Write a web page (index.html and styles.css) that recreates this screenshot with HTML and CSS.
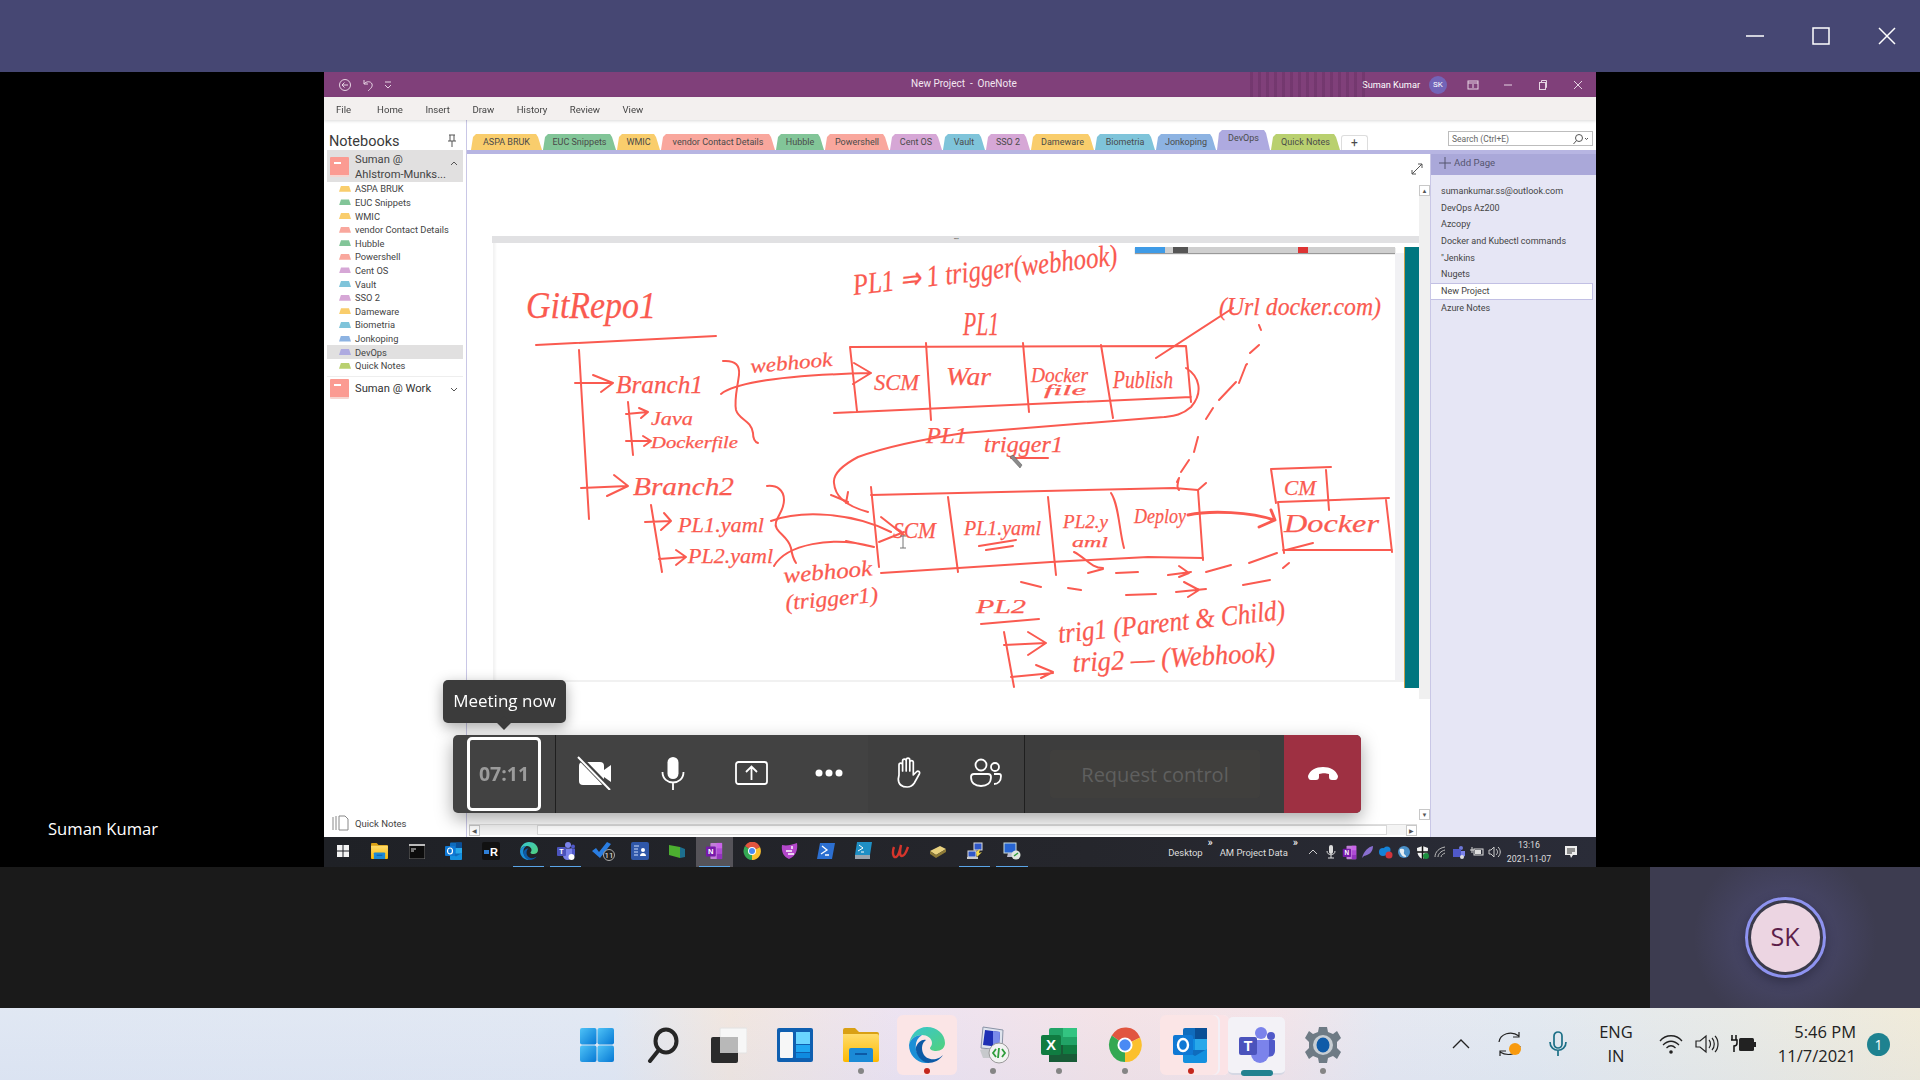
FILE: index.html
```html
<!DOCTYPE html>
<html lang="en">
<head>
    <meta charset="UTF-8">
    <meta name="viewport" content="width=device-width, initial-scale=1.0">
    <title>Meeting now</title>
    <link rel="stylesheet" href="styles.css">
</head>
<body>
    <!-- shared icons -->
    <svg class="sprite" width="0" height="0">
        <defs>
            <linearGradient id="gWin" x1="0" y1="0" x2="1" y2="1"><stop offset="0" stop-color="#4fc3f7"/><stop offset="1" stop-color="#0678d4"/></linearGradient>
            <linearGradient id="gEdge" x1="0" y1="0" x2="1" y2="1"><stop offset="0" stop-color="#37c6d0"/><stop offset="1" stop-color="#52d17c"/></linearGradient>
            <linearGradient id="gFolder" x1="0" y1="0" x2="0" y2="1"><stop offset="0" stop-color="#ffdc6b"/><stop offset="1" stop-color="#fdb900"/></linearGradient>
            <symbol id="i-edge" viewBox="0 0 36 36">
                <path d="M18 0C28 0 36 7 36 16c0 5-4 8-9 8-3 0-6-1-6-3 0-1 2-2 2-5 0-5-5-8-10-8C7 8 1 12 0 18 1 8 8 0 18 0z" fill="url(#gEdge)"/>
                <path d="M0 18C1 12 7 8 13 8c-5 3-7 8-6 14 1 6 6 12 13 14C9 37 0 29 0 18z" fill="#1b8fd6"/>
                <path d="M7 20c2-5 6-8 10-7-4 3-5 8-3 13 2 5 7 7 13 6 3-1 5-2 7-4-3 5-9 8-15 8C13 35 6 28 7 20z" fill="#0c5aa6"/>
            </symbol>
            <symbol id="i-folder" viewBox="0 0 36 34">
                <path d="M0 2a2 2 0 0 1 2-2h10l4 4h18a2 2 0 0 1 2 2v4H0z" fill="#d9a014"/>
                <path d="M0 6h34a2 2 0 0 1 2 2v24a2 2 0 0 1-2 2H2a2 2 0 0 1-2-2z" fill="url(#gFolder)"/>
                <path d="M6 22a2 2 0 0 1 2-2h20a2 2 0 0 1 2 2v12H6z" fill="#1b8ad6"/>
                <rect x="12" y="25" width="12" height="2" fill="#0c5aa6"/>
            </symbol>
            <symbol id="i-outlook" viewBox="0 0 36 36">
                <rect x="10" y="1" width="24" height="34" rx="2" fill="#0f6cbd"/>
                <rect x="22" y="1" width="12" height="11" fill="#0a4f96"/>
                <rect x="22" y="12" width="12" height="11" fill="#28a8ea"/>
                <rect x="10" y="12" width="12" height="11" fill="#0f8be0"/>
                <path d="M10 22l12 7 12-7v12a2 2 0 0 1-2 2H12a2 2 0 0 1-2-2z" fill="#1490df"/>
                <rect x="0" y="8" width="20" height="20" rx="2" fill="#0f78d4"/>
                <ellipse cx="10" cy="18" rx="5" ry="6" fill="none" stroke="#fff" stroke-width="2.4"/>
            </symbol>
            <symbol id="i-chrome" viewBox="0 0 36 36">
                <path d="M18 18L4 8A17 18 0 0 1 34 10z" fill="#e1553f"/>
                <path d="M18 18L34 10A17 18 0 0 1 18 36z" fill="#fbc02d"/>
                <path d="M18 18L18 36A17 18 0 0 1 4 8z" fill="#34a853"/>
                <circle cx="18" cy="18" r="8" fill="#fff"/>
                <circle cx="18" cy="18" r="6" fill="#4a8af4"/>
            </symbol>
            <symbol id="i-teams" viewBox="0 0 36 36">
                <circle cx="22" cy="6" r="6" fill="#7b83eb"/>
                <circle cx="32" cy="9" r="4" fill="#5059c9"/>
                <path d="M27 13h8a1 1 0 0 1 1 1v10a6 6 0 0 1-9 5z" fill="#5059c9"/>
                <path d="M12 13h18v14a9 9 0 0 1-18 0z" fill="#7b83eb"/>
                <rect x="0" y="10" width="18" height="18" rx="2" fill="#4b53bc"/>
                <text x="9" y="24" class="icon-letter" font-size="14" text-anchor="middle">T</text>
            </symbol>
            <symbol id="i-onenote" viewBox="0 0 20 20">
                <rect x="6" y="1" width="13" height="18" rx="1" fill="#c17fd8"/>
                <rect x="13" y="1" width="6" height="6" fill="#ca64ea"/>
                <rect x="13" y="7" width="6" height="6" fill="#ae4bd5"/>
                <rect x="13" y="13" width="6" height="6" fill="#9332bf"/>
                <rect x="1" y="5" width="11" height="11" rx="1" fill="#7719aa"/>
                <text x="6.5" y="13.5" class="icon-letter" font-size="8.5" text-anchor="middle">N</text>
            </symbol>
        </defs>
    </svg>

    <div class="app">
        <header class="top-bar">
            <svg class="win-ctrl" width="18" height="18" viewBox="0 0 18 18"><path d="M0 9h18" /></svg>
            <svg class="win-ctrl" width="18" height="18" viewBox="0 0 18 18"><rect x="1" y="1" width="16" height="16"/></svg>
            <svg class="win-ctrl" width="18" height="18" viewBox="0 0 18 18"><path d="M1 1l16 16M17 1L1 17"/></svg>
        </header>

        <main class="stage">
            <section class="share">
                <div class="on-title">
                    <div class="on-quick">
                        <svg width="14" height="14" viewBox="0 0 14 14"><circle cx="7" cy="7" r="5.5"/><path d="M10 7H4M6.5 4.5L4 7l2.5 2.5"/></svg>
                        <svg width="14" height="14" viewBox="0 0 14 14"><path d="M3 2v4h4M3 6c2-3 7-3 8 0 1 3-2 5-4 7"/></svg>
                        <svg width="8" height="8" viewBox="0 0 8 8"><path d="M1 1h6M1 4l3 3 3-3"/></svg>
                    </div>
                    <div class="on-doc">New Project&nbsp; -&nbsp; OneNote</div>
                    <div class="on-pattern"></div>
                    <div class="on-user">Suman Kumar</div>
                    <div class="on-avatar">SK</div>
                    <div class="on-ctrls">
                        <svg width="12" height="12" viewBox="0 0 12 12"><rect x="1" y="2" width="10" height="8"/><path d="M1 4h10M6 5v4"/></svg>
                        <svg width="12" height="12" viewBox="0 0 12 12"><path d="M2 6h8"/></svg>
                        <svg width="12" height="12" viewBox="0 0 12 12"><rect x="2.5" y="3.5" width="6" height="7"/><path d="M4.5 3.5V1.5h5v7h-1"/></svg>
                        <svg width="12" height="12" viewBox="0 0 12 12"><path d="M2 2l8 8M10 2l-8 8"/></svg>
                    </div>
                </div>

                <nav class="on-menu">
                    <span>File</span><span>Home</span><span>Insert</span><span>Draw</span><span>History</span><span>Review</span><span>View</span>
                </nav>

                <div class="on-main">
                    <aside class="nb-panel">
                        <div class="nb-head">
                            <span>Notebooks</span>
                            <svg width="10" height="14" viewBox="0 0 10 14"><path d="M2 1h6M3 1v6M7 1v6M1 7h8M5 7v6"/></svg>
                        </div>
                        <div class="nb-book nb-book-open">
                            <div class="book-icon"></div>
                            <div class="nb-name">Suman @<br>Ahlstrom-Munks...</div>
                            <svg class="nb-chev" width="8" height="6" viewBox="0 0 8 6"><path d="M1 5l3-3 3 3"/></svg>
                        </div>
                        <ul class="nb-sections">
                            <li><i class="yellow"></i>ASPA BRUK</li>
                            <li><i class="green"></i>EUC Snippets</li>
                            <li><i class="yellow"></i>WMIC</li>
                            <li><i class="salmon"></i>vendor Contact Details</li>
                            <li><i class="green"></i>Hubble</li>
                            <li><i class="salmon"></i>Powershell</li>
                            <li><i class="purple"></i>Cent OS</li>
                            <li><i class="blue"></i>Vault</li>
                            <li><i class="purple"></i>SSO 2</li>
                            <li><i class="yellow"></i>Dameware</li>
                            <li><i class="blue"></i>Biometria</li>
                            <li><i class="blue2"></i>Jonkoping</li>
                            <li class="current"><i class="lav"></i>DevOps</li>
                            <li><i class="lime"></i>Quick Notes</li>
                        </ul>
                        <div class="nb-book nb-book-work">
                            <div class="book-icon"></div>
                            <div class="nb-name">Suman @ Work</div>
                            <svg class="nb-chev" width="8" height="6" viewBox="0 0 8 6"><path d="M1 1l3 3 3-3"/></svg>
                        </div>
                        <div class="nb-quick">
                            <svg width="18" height="16" viewBox="0 0 18 16"><path d="M1 2v13M4 1v14M7 1h6l3 3v11H7z"/></svg>
                            Quick Notes
                        </div>
                    </aside>

                    <div class="on-content">
                        <div class="tabs-row">
                            <div class="tabs">
                                <div class="tab yellow">ASPA BRUK</div>
                                <div class="tab green">EUC Snippets</div>
                                <div class="tab yellow">WMIC</div>
                                <div class="tab salmon">vendor Contact Details</div>
                                <div class="tab green">Hubble</div>
                                <div class="tab salmon">Powershell</div>
                                <div class="tab purple">Cent OS</div>
                                <div class="tab blue">Vault</div>
                                <div class="tab purple">SSO 2</div>
                                <div class="tab yellow">Dameware</div>
                                <div class="tab blue">Biometria</div>
                                <div class="tab blue2">Jonkoping</div>
                                <div class="tab lav tab-on">DevOps</div>
                                <div class="tab lime">Quick Notes</div>
                                <div class="tab tab-add">+</div>
                            </div>
                            <div class="search">
                                <span>Search (Ctrl+E)</span>
                                <svg width="18" height="12" viewBox="0 0 18 12"><circle cx="8" cy="5" r="3.5"/><path d="M5.5 7.5L2.5 11M14 5l1.5 1.5L17 5"/></svg>
                            </div>
                        </div>
                        <div class="on-body">
                            <div class="canvas">
                                <div class="note">
                                    <div class="note-grip"><span>••••</span></div>
                                    <div class="note-page">
                                        <div class="note-toolbar"><i class="tb-blue"></i><i class="tb-dark"></i><i class="tb-red"></i></div>
                                        <div class="note-scroll"></div>
                                        <div class="note-teal"></div>
                                    </div>
                                </div>
                                <svg class="expand" width="14" height="14" viewBox="0 0 14 14"><path d="M2 12L12 2M8 2h4v4M2 8v4h4"/></svg>
                                <div class="v-scroll">
                                    <div class="sb-btn">▲</div>
                                    <div class="sb-track"></div>
                                    <div class="sb-btn">▼</div>
                                </div>
                                <div class="h-scroll">
                                    <div class="sb-btn">◀</div>
                                    <div class="h-space"></div>
                                    <div class="h-thumb"></div>
                                    <div class="sb-btn">▶</div>
                                </div>

                                <!-- whiteboard ink, viewBox in screen coordinates -->
                                <svg class="ink" width="964" height="683" viewBox="466 154 964 683">
                                    <g class="ink-lines">
                                        <path d="M535 345L715 336"/>
                                        <path d="M578 350L588 519M574 383L610 383M592 375L612 383L600 392"/>
                                        <path d="M627 402L632 455M625 414L647 412M638 408L647 412L640 418M625 441L650 441M642 436L650 441L643 446"/>
                                        <path d="M722 361C735 360 739 366 738 375C736 390 733 400 735 410C738 420 750 420 752 433C752 438 754 442 757 443"/>
                                        <path d="M720 394C735 382 790 375 870 373M853 363L870 373L852 384"/>
                                        <path d="M849 347L1185 346L1190 402M849 347L856 411M833 413L1190 397"/>
                                        <path d="M925 343L930 420M1022 343L1028 412M1100 345L1112 418"/>
                                        <path d="M1155 358L1232 308"/>
                                        <path d="M1258 325L1260 330M1249 353L1258 345M1238 383L1245 365L1246 364M1218 400L1235 382M1205 419L1212 408M1193 452L1197 437M1180 472L1188 460M1176 482L1178 478C1176 486 1176 488 1178 490"/>
                                        <path d="M1185 368C1198 376 1203 392 1190 407C1180 416 1170 416 1163 417L963 433C930 438 890 445 857 457C840 466 832 475 833 483C834 495 842 505 867 512"/>
                                        <path d="M830 495L847 502M847 492L845 503"/>
                                        <path d="M1010 458L1047 458"/>
                                        <path d="M580 488L627 486M613 475L627 486L606 496"/>
                                        <path d="M650 505L661 572M644 522L670 521M663 513L670 521L660 530M658 559L685 557M675 550L685 557L675 565"/>
                                        <path d="M766 486C776 485 783 490 783 500C783 510 777 515 775 522C772 532 787 535 790 548C791 555 793 560 795 563"/>
                                        <path d="M770 521C800 510 850 512 890 532"/>
                                        <path d="M773 566C785 545 830 535 873 547M845 541L873 547"/>
                                        <path d="M870 487L878 567M870 495L1173 488L1197 490L1205 483M1197 490L1202 560"/>
                                        <path d="M880 573L1050 562L1147 557L1202 558"/>
                                        <path d="M878 542L903 532M880 517L903 535"/>
                                        <path d="M947 497L957 572M1047 497L1055 575M1110 493C1118 505 1118 530 1123 548"/>
                                        <path d="M978 546L1015 540M985 550L1012 546M1073 552C1085 558 1090 568 1102 568"/>
                                        <path class="ink-thick" d="M1187 515C1210 510 1250 512 1273 520M1270 510L1274 520L1258 527"/>
                                        <path d="M1270 469L1330 467M1270 469L1275 503M1325 470L1328 510"/>
                                        <path d="M1277 502L1388 498M1385 500L1391 552M1277 502L1283 553M1282 550L1391 550M1285 550L1312 543"/>
                                        <path d="M1087 573L1102 569M1115 573L1137 572M1167 575L1190 572M1178 566L1188 573L1178 577M1205 572L1230 565M1248 563L1276 553M1282 568L1288 563"/>
                                        <path d="M1020 582L1040 587M1067 588L1080 590M1125 595L1155 594M1175 592L1205 589M1183 582L1198 590L1187 597M1242 585L1269 580"/>
                                        <path d="M980 624L1038 619M1003 632L1013 687"/>
                                        <path d="M1003 645L1045 643M1027 632L1045 643L1027 655M1010 677L1052 673M1035 665L1052 672L1040 678"/>
                                    </g>
                                    <g class="ink-words">
                                        <text x="525" y="318" font-size="38" textLength="130" lengthAdjust="spacingAndGlyphs">GitRepo1</text>
                                        <text transform="rotate(-6.5 853 295)" x="853" y="295" font-size="30" textLength="266" lengthAdjust="spacingAndGlyphs">PL1 ⇒ 1 trigger(webhook)</text>
                                        <text x="615" y="393" font-size="26" textLength="87" lengthAdjust="spacingAndGlyphs">Branch1</text>
                                        <text x="650" y="425" font-size="18" textLength="42" lengthAdjust="spacingAndGlyphs">Java</text>
                                        <text x="650" y="448" font-size="16" textLength="87" lengthAdjust="spacingAndGlyphs">Dockerfile</text>
                                        <text transform="rotate(-5 750 373)" x="750" y="373" font-size="20" textLength="82" lengthAdjust="spacingAndGlyphs">webhook</text>
                                        <text x="873" y="390" font-size="24" textLength="45" lengthAdjust="spacingAndGlyphs">SCM</text>
                                        <text x="945" y="385" font-size="26" textLength="45" lengthAdjust="spacingAndGlyphs">War</text>
                                        <text x="1030" y="382" font-size="20" textLength="57" lengthAdjust="spacingAndGlyphs">Docker</text>
                                        <text x="1043" y="395" font-size="14" textLength="42" lengthAdjust="spacingAndGlyphs">file</text>
                                        <text x="1112" y="388" font-size="26" textLength="60" lengthAdjust="spacingAndGlyphs">Publish</text>
                                        <text x="962" y="335" font-size="34" textLength="36" lengthAdjust="spacingAndGlyphs">PL1</text>
                                        <text x="1218" y="315" font-size="26" textLength="162" lengthAdjust="spacingAndGlyphs">(Url docker.com)</text>
                                        <text x="925" y="443" font-size="24" textLength="41" lengthAdjust="spacingAndGlyphs">PL1</text>
                                        <text x="983" y="452" font-size="24" textLength="79" lengthAdjust="spacingAndGlyphs">trigger1</text>
                                        <text x="632" y="495" font-size="26" textLength="101" lengthAdjust="spacingAndGlyphs">Branch2</text>
                                        <text x="677" y="532" font-size="22" textLength="86" lengthAdjust="spacingAndGlyphs">PL1.yaml</text>
                                        <text x="687" y="563" font-size="20" textLength="85" lengthAdjust="spacingAndGlyphs">PL2.yaml</text>
                                        <text x="892" y="538" font-size="24" textLength="43" lengthAdjust="spacingAndGlyphs">SCM</text>
                                        <text transform="rotate(-5 783 583)" x="783" y="583" font-size="22" textLength="89" lengthAdjust="spacingAndGlyphs">webhook</text>
                                        <text transform="rotate(-5 785 610)" x="785" y="610" font-size="22" textLength="93" lengthAdjust="spacingAndGlyphs">(trigger1)</text>
                                        <text x="963" y="535" font-size="20" textLength="77" lengthAdjust="spacingAndGlyphs">PL1.yaml</text>
                                        <text x="1062" y="528" font-size="18" textLength="45" lengthAdjust="spacingAndGlyphs">PL2.y</text>
                                        <text x="1071" y="547" font-size="14" textLength="36" lengthAdjust="spacingAndGlyphs">aml</text>
                                        <text x="1133" y="523" font-size="22" textLength="52" lengthAdjust="spacingAndGlyphs">Deploy</text>
                                        <text x="1283" y="495" font-size="20" textLength="32" lengthAdjust="spacingAndGlyphs">CM</text>
                                        <text x="1283" y="532" font-size="26" textLength="95" lengthAdjust="spacingAndGlyphs">Docker</text>
                                        <text x="975" y="613" font-size="18" textLength="50" lengthAdjust="spacingAndGlyphs">PL2</text>
                                        <text transform="rotate(-6 1058 643)" x="1058" y="643" font-size="28" textLength="228" lengthAdjust="spacingAndGlyphs">trig1 (Parent &amp; Child)</text>
                                        <text transform="rotate(-3 1072 672)" x="1072" y="672" font-size="28" textLength="203" lengthAdjust="spacingAndGlyphs">trig2 — (Webhook)</text>
                                    </g>
                                    <path class="pen" d="M1009 457l3-2 9 10-2 3z"/>
                                    <path class="ibeam" d="M899 536h6M902 536v12M899 548h6"/>
                                </svg>
                            </div>
                            <aside class="pages">
                                <div class="add-page">
                                    <svg width="12" height="12" viewBox="0 0 12 12"><path d="M6 0v12M0 6h12"/></svg>
                                    Add Page
                                </div>
                                <ul class="page-list">
                                    <li>sumankumar.ss@outlook.com</li>
                                    <li>DevOps Az200</li>
                                    <li>Azcopy</li>
                                    <li>Docker and Kubectl commands</li>
                                    <li>"Jenkins</li>
                                    <li>Nugets</li>
                                    <li class="current">New Project</li>
                                    <li>Azure Notes</li>
                                </ul>
                            </aside>
                        </div>
                    </div>
                </div>

                <div class="mini-bar">
                    <div class="mini-item">
                        <svg width="14" height="14" viewBox="0 0 14 14" class="mini-win"><rect x="1" y="1" width="5.5" height="5.5"/><rect x="7.5" y="1" width="5.5" height="5.5"/><rect x="1" y="7.5" width="5.5" height="5.5"/><rect x="7.5" y="7.5" width="5.5" height="5.5"/></svg>
                    </div>
                    <div class="mini-item"><svg width="17" height="16"><use href="#i-folder"/></svg></div>
                    <div class="mini-item"><svg width="16" height="15" viewBox="0 0 16 15"><rect width="16" height="15" fill="#0c0c0c" stroke="#777"/><rect y="0" width="16" height="2" fill="#bbb"/><path d="M2 5h5M2 7h3" stroke="#ddd"/></svg></div>
                    <div class="mini-item"><svg width="18" height="18"><use href="#i-outlook"/></svg></div>
                    <div class="mini-item"><svg width="18" height="18" viewBox="0 0 18 18"><rect width="18" height="18" rx="2" fill="#111"/><rect x="2" y="8" width="5" height="4" fill="#2f7fd6"/><text x="12" y="14" class="icon-letter" font-size="11" text-anchor="middle">R</text></svg></div>
                    <div class="mini-item on"><svg width="18" height="18"><use href="#i-edge"/></svg></div>
                    <div class="mini-item on"><svg width="18" height="18" viewBox="0 0 36 36"><use href="#i-teams" width="36" height="36"/><circle cx="29" cy="30" r="6" fill="#fff"/></svg></div>
                    <div class="mini-item"><svg width="24" height="20" viewBox="0 0 24 20"><path d="M1 10l4-3 3 4L16 1l4 2-11 14z" fill="#2a7de1"/><circle cx="18" cy="14" r="5.5" fill="#222" stroke="#aaa"/><text x="18" y="17" class="icon-num" font-size="8" text-anchor="middle">11</text></svg></div>
                    <div class="mini-item"><svg width="18" height="18" viewBox="0 0 18 18"><rect width="18" height="18" rx="2" fill="#2f57a8"/><path d="M3 4h5M3 7h4M3 10h4M3 13h4" stroke="#cfe0ff"/><circle cx="12" cy="8" r="2" fill="#fff"/><path d="M9 14c0-4 6-4 6 0z" fill="#fff"/></svg></div>
                    <div class="mini-item"><svg width="18" height="16" viewBox="0 0 18 16"><path d="M1 2l11 2v11L1 12z" fill="#4caf30"/><path d="M12 4l5 2v8l-5 1z" fill="#1d6f8f"/></svg></div>
                    <div class="mini-item on active"><svg width="18" height="18"><use href="#i-onenote"/></svg></div>
                    <div class="mini-item"><svg width="18" height="18"><use href="#i-chrome"/></svg></div>
                    <div class="mini-item"><svg width="18" height="18" viewBox="0 0 18 18"><path d="M2 3c5 1 9 0 15-2 1 7-1 13-8 16C4 15 1 10 2 3z" fill="#b347c9"/><path d="M6 9h6M8 12h6M12 4v3" stroke="#fff" stroke-width="1.4"/></svg></div>
                    <div class="mini-item"><svg width="18" height="16" viewBox="0 0 18 16"><path d="M3 0h15l-3 16H0z" fill="#2c6fd1"/><path d="M5 3l5 4-6 4M8 12h4" stroke="#fff" fill="none" stroke-width="1.3"/></svg></div>
                    <div class="mini-item"><svg width="18" height="18" viewBox="0 0 18 18"><path d="M3 0h15l-2 13H1z" fill="#1f8fc4"/><path d="M5 3l4 3-5 3M7 10h3" stroke="#fff" fill="none"/><rect x="1" y="13" width="15" height="4" fill="#9aa4ad"/></svg></div>
                    <div class="mini-item"><svg width="18" height="18" viewBox="0 0 18 18"><path d="M3 5C1 10 2 16 5 15c3-1 4-8 5-12-1 5-2 11 1 11 2 0 4-3 6-9" fill="none" stroke="#d5352c" stroke-width="2.4"/></svg></div>
                    <div class="mini-item"><svg width="18" height="14" viewBox="0 0 18 14"><path d="M1 7l10-5 6 3-10 6z" fill="#e9d27f"/><path d="M1 7l6 4 10-6v3l-10 6-6-4z" fill="#8d7a36"/></svg></div>
                    <div class="mini-item on"><svg width="18" height="18" viewBox="0 0 18 18"><rect x="8" y="1" width="8" height="7" fill="#2f57c8" stroke="#ddd"/><rect x="2" y="9" width="8" height="6" fill="#2f57c8" stroke="#ddd"/><path d="M10 10l4-3-1 4 3-1-5 5" fill="#f2d94e"/><rect x="1" y="15" width="11" height="2" fill="#ccc"/></svg></div>
                    <div class="mini-item on"><svg width="18" height="18" viewBox="0 0 18 18"><rect x="1" y="1" width="12" height="10" fill="#2764d1" stroke="#cdd"/><path d="M5 11l-1 4h9l-2-4" fill="#bbc"/><circle cx="13" cy="13" r="4.5" fill="#dfe6df"/><path d="M11 14l4-3" stroke="#2f9e3c" stroke-width="1.5"/></svg></div>

                    <div class="mini-tray">
                        <span class="mini-link">Desktop</span><sup>»</sup>
                        <span class="mini-link">AM Project Data</span><sup>»</sup>
                        <div class="mini-icons">
                            <svg width="12" height="12" viewBox="0 0 12 12"><path d="M2 8l4-4 4 4" fill="none" stroke="#ccc"/></svg>
                            <svg width="12" height="16" viewBox="0 0 12 16"><rect x="4" y="1" width="4" height="9" rx="2" fill="#ddd"/><path d="M2 7c0 5 8 5 8 0M6 11v3M3 14h6" stroke="#ddd" fill="none"/></svg>
                            <svg width="15" height="15"><use href="#i-onenote"/></svg>
                            <svg width="13" height="14" viewBox="0 0 13 14"><path d="M1 13C3 6 7 2 12 1c0 6-4 9-9 10z" fill="#8a6fd0"/></svg>
                            <svg width="15" height="13" viewBox="0 0 15 13"><circle cx="5" cy="6" r="4" fill="#1583d8"/><circle cx="9" cy="4" r="3.5" fill="#1583d8"/><circle cx="11" cy="9" r="3.5" fill="#d1343b"/></svg>
                            <svg width="14" height="14" viewBox="0 0 14 14"><circle cx="7" cy="7" r="6" fill="#4a90c8"/><path d="M3 4c3-1 5 0 4 3s3 3 2 5c-3 0-4-1-5-3S2 6 3 4z" fill="#e6eef2"/></svg>
                            <svg width="13" height="15" viewBox="0 0 13 15"><path d="M6.5 1l5.5 2c0 5-1 9-5.5 11C2 12 1 8 1 3z" fill="#f2f2f2"/><path d="M6.5 1v13M1 7h11" stroke="#111" stroke-width="1.5"/><circle cx="10" cy="11" r="3" fill="#1c8f3e"/></svg>
                            <svg width="14" height="12" viewBox="0 0 14 12"><path d="M2 11c0-5 4-9 10-10M5 11c0-3 3-6 7-7M8 11c0-2 2-3 4-4" fill="none" stroke="#bbb"/></svg>
                            <svg width="14" height="15" viewBox="0 0 14 15"><circle cx="9" cy="3" r="2" fill="#6d78d8"/><rect x="1" y="4" width="8" height="8" fill="#5059c9"/><path d="M9 6h4v5l-4 2z" fill="#7b83eb"/><circle cx="10" cy="12" r="2" fill="#ddd"/></svg>
                            <svg width="16" height="12" viewBox="0 0 16 12"><rect x="5" y="3" width="9" height="6" fill="none" stroke="#ddd"/><rect x="6" y="4" width="6" height="4" fill="#ddd"/><path d="M1 4h4M3 1v6" stroke="#ddd"/></svg>
                            <svg width="14" height="12" viewBox="0 0 14 12"><path d="M1 4h2l3-3v10L3 8H1zM8 3c2 2 2 4 0 6M10 1c3 3 3 7 0 10" fill="none" stroke="#ccc"/></svg>
                        </div>
                        <div class="mini-clock">13:16<br>2021-11-07</div>
                        <svg class="mini-notif" width="14" height="14" viewBox="0 0 14 14"><path d="M1 1h12v9H9l-2 3-1-3H1z" fill="#eee"/><path d="M3 4h8M3 6h8M3 8h5" stroke="#333"/></svg>
                    </div>
                </div>
            </section>

            <div class="name-tag">Suman Kumar</div>

            <div class="tip">Meeting now</div>

            <div class="call-bar">
                <div class="call-timer"><div class="timer-box">07:11</div></div>
                <div class="call-group">
                    <div class="call-btn">
                        <svg width="36" height="34" viewBox="0 0 36 34"><rect x="2" y="6" width="25" height="23" rx="4" fill="#fff"/><path d="M27 14l7-5v17l-7-5z" fill="#fff"/><path d="M2 1l31 32" stroke="#424242" stroke-width="5"/><path d="M1 1l32 33" stroke="#fff" stroke-width="2"/></svg>
                    </div>
                    <div class="call-btn">
                        <svg width="24" height="34" viewBox="0 0 24 34"><rect x="6.5" y="1" width="11" height="22" rx="5.5" fill="#fff"/><path d="M1.5 16c0 14 21 14 21 0M12 27v7" fill="none" stroke="#fff" stroke-width="1.8"/></svg>
                    </div>
                    <div class="call-btn">
                        <svg width="33" height="24" viewBox="0 0 33 24"><rect x="1" y="1" width="31" height="22" rx="2.5" fill="none" stroke="#fff" stroke-width="1.8"/><path d="M16.5 19V6M11 11l5.5-5.5L22 11" fill="none" stroke="#fff" stroke-width="1.8"/></svg>
                    </div>
                    <div class="call-btn">
                        <svg width="28" height="8" viewBox="0 0 28 8"><circle cx="4" cy="4" r="3.5" fill="#fff"/><circle cx="14" cy="4" r="3.5" fill="#fff"/><circle cx="24" cy="4" r="3.5" fill="#fff"/></svg>
                    </div>
                </div>
                <div class="call-group call-group-dark">
                    <div class="call-btn">
                        <svg width="28" height="32" viewBox="0 0 28 32"><path d="M6 18V8a1.8 1.8 0 0 1 3.6 0v6V4a1.8 1.8 0 0 1 3.6 0v10V3a1.8 1.8 0 0 1 3.6 0v11V5a1.8 1.8 0 0 1 3.5 0v13l3-3c2-2 4 0 3 2l-5 9c-2 3-4 4-7 4-5 0-9-2-9-8z" fill="none" stroke="#fff" stroke-width="1.7" stroke-linejoin="round"/></svg>
                    </div>
                    <div class="call-btn">
                        <svg width="33" height="30" viewBox="0 0 33 30"><circle cx="12" cy="7" r="5.5" fill="none" stroke="#fff" stroke-width="1.8"/><circle cx="26" cy="9" r="4" fill="none" stroke="#fff" stroke-width="1.8"/><path d="M5 16h14a3 3 0 0 1 3 3c0 6-4 9-10 9S2 25 2 19a3 3 0 0 1 3-3zM25 16h5a2 2 0 0 1 2 2c0 5-3 8-7 8" fill="none" stroke="#fff" stroke-width="1.8"/></svg>
                    </div>
                </div>
                <div class="call-request"><div class="request-btn">Request control</div></div>
                <div class="call-hangup">
                    <svg width="32" height="13" viewBox="0 0 32 13"><path d="M1 9C3 3 9 0 16 0s13 3 15 9c0 2-1 4-3 4h-3c-2 0-3-1-3-3V7c-4-1-6-1-10 0v3c0 2-1 3-3 3H4c-2 0-3-2-3-4z" fill="#fff"/></svg>
                </div>
            </div>
        </main>

        <div class="lower">
            <div class="lower-fill"></div>
            <div class="self-view">
                <div class="self-ring"><div class="self-avatar">SK</div></div>
            </div>
        </div>

        <footer class="taskbar">
            <div class="tb-spacer"></div>
            <div class="tb-apps">
                <div class="tb-item">
                    <svg width="36" height="36" viewBox="0 0 36 36"><rect x="1" y="1" width="16.5" height="16.5" rx="2" fill="url(#gWin)"/><rect x="18.5" y="1" width="16.5" height="16.5" rx="2" fill="url(#gWin)"/><rect x="1" y="18.5" width="16.5" height="16.5" rx="2" fill="url(#gWin)"/><rect x="18.5" y="18.5" width="16.5" height="16.5" rx="2" fill="url(#gWin)"/></svg>
                </div>
                <div class="tb-item">
                    <svg width="34" height="36" viewBox="0 0 34 36"><ellipse cx="20" cy="14" rx="10.5" ry="11.5" fill="none" stroke="#262626" stroke-width="4"/><path d="M12 24L4 34" stroke="#262626" stroke-width="4" stroke-linecap="round"/></svg>
                </div>
                <div class="tb-item">
                    <svg width="36" height="36" viewBox="0 0 36 36"><rect x="9" y="1" width="27" height="25" rx="1" fill="#f7f7f7" stroke="#e2e2e2"/><rect x="0" y="10" width="27" height="26" rx="2" fill="#2b2b2b"/><rect x="9" y="10" width="18" height="16" fill="#b8b8b8"/></svg>
                </div>
                <div class="tb-item">
                    <svg width="36" height="34" viewBox="0 0 36 34"><rect width="36" height="34" rx="2" fill="#0f5fb0"/><rect x="3" y="4" width="13" height="26" rx="1" fill="#f7f7f7"/><rect x="19" y="4" width="14" height="12" fill="#69d5ff"/><rect x="19" y="17" width="14" height="7" fill="#1ea6f1"/><rect x="19" y="25" width="14" height="5" fill="#0f8ae0"/></svg>
                </div>
                <div class="tb-item has-dot">
                    <svg width="36" height="34"><use href="#i-folder"/></svg>
                </div>
                <div class="tb-item has-dot alert tile">
                    <svg width="36" height="36"><use href="#i-edge"/></svg>
                </div>
                <div class="tb-item has-dot">
                    <svg width="36" height="38" viewBox="0 0 36 38"><path d="M8 1l20 3-1 20-21-2z" fill="#dfe4ee" stroke="#8a93a6"/><path d="M10 4l15 2-1 15-16-2z" fill="#1e2fb5"/><path d="M18 5l7 1-1 15-6-1z" fill="#7a8bea"/><path d="M5 24c5-2 14-1 18 2v6H8z" fill="#c7c9cc"/><circle cx="24" cy="27" r="10" fill="#f2f3f2" stroke="#999"/><path d="M21 23l-3 4 3 4M27 23l3 4-3 4M24 22l-1 10" stroke="#2f9e3c" stroke-width="1.8" fill="none"/></svg>
                </div>
                <div class="tb-item has-dot">
                    <svg width="36" height="36" viewBox="0 0 36 36"><rect x="8" y="1" width="28" height="34" rx="2" fill="#21a366"/><rect x="22" y="1" width="14" height="9" fill="#33c481"/><rect x="22" y="18" width="14" height="9" fill="#107c41"/><rect x="8" y="18" width="14" height="9" fill="#185c37"/><rect x="8" y="27" width="28" height="8" fill="#185c37"/><rect x="0" y="8" width="20" height="20" rx="2" fill="#107c41"/><text x="10" y="23" class="icon-letter" font-size="15" text-anchor="middle">X</text></svg>
                </div>
                <div class="tb-item has-dot">
                    <svg width="34" height="36"><use href="#i-chrome"/></svg>
                </div>
                <div class="tb-item has-dot alert tile tile-outlook">
                    <svg width="36" height="36"><use href="#i-outlook"/></svg>
                </div>
                <div class="tb-item tile-teams">
                    <svg width="36" height="36"><use href="#i-teams"/></svg>
                </div>
                <div class="tb-item has-dot">
                    <svg width="36" height="38" viewBox="0 0 36 38"><path d="M14 1h8l1 5 5 2 4-3 4 7-4 4v6l4 4-4 7-4-3-5 2-1 5h-8l-1-5-5-2-4 3-4-7 4-4v-6l-4-4 4-7 4 3 5-2z" fill="#6e7b85"/><circle cx="18" cy="19" r="10" fill="#c8ced3"/><ellipse cx="18" cy="19" rx="6.5" ry="7.5" fill="#0f5ba8"/></svg>
                </div>
            </div>
            <div class="tb-tray">
                <svg width="18" height="10" viewBox="0 0 18 10"><path d="M1 9l8-8 8 8" fill="none" stroke="#222" stroke-width="1.3"/></svg>
                <svg width="26" height="26" viewBox="0 0 26 26"><path d="M2 11C3 3 14-1 22 5M22 1v5h-6M23 15c-1 8-12 11-20 6M3 25v-5h6" fill="none" stroke="#222" stroke-width="1.2"/><circle cx="18" cy="18" r="6" fill="#f89a0e"/></svg>
                <svg width="18" height="26" viewBox="0 0 18 26"><rect x="5" y="1" width="8" height="16" rx="4" fill="none" stroke="#1c6f86" stroke-width="1.7"/><path d="M1 11c0 11 16 11 16 0M9 19v6" fill="none" stroke="#1c6f86" stroke-width="1.7"/></svg>
                <div class="tray-lang">ENG<br>IN</div>
                <svg width="24" height="20" viewBox="0 0 24 20"><path d="M1 7c6-7 16-7 22 0M4 11c5-5 11-5 16 0M7.5 14c3-3 6-3 9 0" fill="none" stroke="#222" stroke-width="1.3"/><circle cx="12" cy="18" r="1.8" fill="#222"/></svg>
                <svg width="24" height="20" viewBox="0 0 24 20"><path d="M1 7h4l6-5v16l-6-5H1zM14 6c2 2 2 6 0 8M17 4c3 3 3 9 0 12M20 2c4 4 4 12 0 16" fill="none" stroke="#222" stroke-width="1.2"/></svg>
                <svg width="25" height="20" viewBox="0 0 25 20"><path d="M1 1v5M5 1v5M0 6h6v3c0 2-1 3-3 3v6" fill="none" stroke="#111" stroke-width="1.5"/><rect x="8" y="4" width="15" height="13" rx="1.5" fill="#222"/><rect x="23" y="8" width="2" height="5" fill="#222"/></svg>
                <div class="tray-clock">5:46 PM<br>11/7/2021</div>
                <div class="tray-badge">1</div>
            </div>
        </footer>
    </div>
</body>
</html>
```

FILE: styles.css
```css
* {
    box-sizing: border-box;
}
html, body {
    margin: 0;
    padding: 0;
    height: 100%;
    overflow: hidden;
    background: #000;
}
ul {
    list-style: none;
    margin: 0;
    padding: 0;
}
.sprite {
    position: absolute;
}
.icon-letter {
    font-family: "Liberation Sans", sans-serif;
    font-weight: bold;
    fill: #fff;
}
.icon-num {
    font-family: "Roboto", sans-serif;
    fill: #eee;
}
.app {
    width: 1920px;
    height: 1080px;
    display: flex;
    flex-direction: column;
    font-family: "Open Sans", sans-serif;
}

/* meeting window title */
.top-bar {
    height: 72px;
    flex: none;
    background: #464773;
    display: flex;
    justify-content: flex-end;
    align-items: center;
    gap: 48px;
    padding-right: 24px;
}
.win-ctrl {
    fill: none;
    stroke: #fff;
    stroke-width: 1.5;
}

.stage {
    position: relative;
    height: 795px;
    flex: none;
    background: #000;
    padding-left: 324px;
}

/* shared screen */
.share {
    width: 1272px;
    height: 795px;
    display: flex;
    flex-direction: column;
    font-family: "Roboto", sans-serif;
    filter: blur(.35px);
    background: #fff;
}
.on-title {
    height: 25px;
    flex: none;
    background: #80407a;
    color: #fff;
    display: flex;
    align-items: center;
    position: relative;
    font-size: 10px;
}
.on-quick {
    display: flex;
    align-items: center;
    gap: 9px;
    padding-left: 14px;
}
.on-quick svg, .on-ctrls svg {
    fill: none;
    stroke: #e6d3e3;
    stroke-width: 1;
}
.on-doc {
    position: absolute;
    left: 587px;
    top: 6px;
    font-size: 10px;
    color: #f3e7f1;
}
.on-pattern {
    position: absolute;
    left: 926px;
    top: 0;
    width: 120px;
    height: 25px;
    background: repeating-linear-gradient(90deg, rgba(60, 20, 60, .18) 0 3px, transparent 3px 8px);
}
.on-user {
    margin-left: auto;
    font-size: 9.2px;
}
.on-avatar {
    width: 18px;
    height: 18px;
    margin-left: 9px;
    border-radius: 50%;
    background: #7264b8;
    font-size: 8px;
    text-align: center;
    line-height: 18px;
}
.on-ctrls {
    display: flex;
    gap: 23px;
    margin-left: 20px;
    padding-right: 12px;
}
.on-menu {
    height: 23px;
    flex: none;
    background: #f3f0ef;
    box-shadow: 0 1px 3px rgba(0, 0, 0, .15);
    display: flex;
    align-items: center;
    font-size: 9.6px;
    color: #444;
    padding: 1px 0 0 12px;
    gap: 22.5px;
    position: relative;
    z-index: 1;
}
.on-menu span:nth-child(2) {
    margin-left: 3.5px;
}
.on-main {
    flex: 1;
    display: flex;
    min-height: 0;
}

/* notebook list */
.nb-panel {
    width: 143px;
    flex: none;
    background: #fff;
    border-right: 1px solid #c9c7e6;
    padding: 12px 3px 0;
    position: relative;
}
.nb-head {
    height: 18px;
    display: flex;
    justify-content: space-between;
    align-items: center;
    font-size: 14.5px;
    color: #3a3a3a;
    padding: 0 6px 0 2px;
}
.nb-head svg, .nb-chev, .nb-quick svg {
    fill: none;
    stroke: #555;
    stroke-width: 1;
}
.nb-book {
    display: flex;
    align-items: center;
    font-size: 11.2px;
    color: #444;
    line-height: 15px;
    position: relative;
}
.nb-book-open {
    height: 32px;
    background: #e1e0e0;
    padding-top: 2px;
}
.nb-book-work {
    height: 24px;
    margin-top: 3px;
    border-top: 1px solid #eee;
    color: #333;
    padding-top: 1px;
}
.book-icon {
    width: 19px;
    height: 20px;
    margin: 0 6px 0 3px;
    background: #fb9b92;
    border-radius: 1px;
    border-bottom: 2px solid #f6d5d0;
    position: relative;
}
.book-icon::before {
    content: "";
    position: absolute;
    left: 4px;
    top: 5px;
    width: 7px;
    height: 2px;
    background: #fff;
}
.nb-chev {
    position: absolute;
    left: 123px;
    top: 10px;
}
.nb-sections li {
    height: 13.62px;
    display: flex;
    align-items: center;
    font-size: 9.3px;
    color: #444;
    padding-left: 12px;
}
.nb-sections li.current {
    background: #e1e0e0;
}
.nb-sections i {
    width: 12px;
    height: 6px;
    margin-right: 4px;
    clip-path: polygon(2px 0, calc(100% - 2px) 0, 100% 100%, 0 100%);
    background: var(--tab);
}
.nb-quick {
    position: absolute;
    left: 8px;
    top: 695px;
    display: flex;
    align-items: center;
    gap: 5px;
    font-size: 9.5px;
    color: #444;
}
.nb-quick svg {
    stroke: #888;
}
.yellow { --tab: #f9cd6c; }
.green { --tab: #82c598; }
.salmon { --tab: #f9a79d; }
.purple { --tab: #d6a7d6; }
.blue { --tab: #7fc4da; }
.blue2 { --tab: #8db3e2; }
.lav { --tab: #aeaae0; }
.lime { --tab: #b9d06f; }

.on-content {
    flex: 1;
    display: flex;
    flex-direction: column;
    min-width: 0;
}
.tabs-row {
    height: 30px;
    flex: none;
    display: flex;
    align-items: flex-end;
    position: relative;
    background: #fff;
}
.tabs {
    display: flex;
    gap: 1px;
    align-items: flex-end;
    padding-left: 4px;
}
.tab {
    height: 16px;
    flex: none;
    background: var(--tab);
    font-size: 9px;
    line-height: 16px;
    color: #4a4a4a;
    text-align: center;
    white-space: nowrap;
    clip-path: polygon(0 100%, 2px 3px, 5px 0, calc(100% - 6px) 0, calc(100% - 4px) 3px, 100% 100%);
}
.tab:nth-child(1) { width: 71px; }
.tab:nth-child(2) { width: 73px; }
.tab:nth-child(3) { width: 43px; }
.tab:nth-child(4) { width: 114px; }
.tab:nth-child(5) { width: 48px; }
.tab:nth-child(6) { width: 64px; }
.tab:nth-child(7) { width: 52px; }
.tab:nth-child(8) { width: 42px; }
.tab:nth-child(9) { width: 44px; }
.tab:nth-child(10) { width: 63px; }
.tab:nth-child(11) { width: 60px; }
.tab:nth-child(12) { width: 60px; }
.tab:nth-child(13) { width: 53px; }
.tab:nth-child(14) { width: 69px; }
.tab:nth-child(15) { width: 27px; }
.tab-on {
    height: 20px;
    line-height: 17px;
}
.tab-add {
    background: #fff;
    border: 1px solid #ddd;
    border-bottom: none;
    height: 15px;
    line-height: 15px;
    font-size: 12px;
    clip-path: none;
    border-radius: 3px 3px 0 0;
}
.search {
    position: absolute;
    left: 981px;
    top: 11px;
    width: 145px;
    height: 15px;
    background: #fff;
    border: 1px solid #bdbdbd;
    font-size: 8.5px;
    color: #666;
    display: flex;
    justify-content: space-between;
    align-items: center;
    padding: 0 3px;
}
.search svg {
    fill: none;
    stroke: #555;
    stroke-width: 1;
}
.on-body {
    flex: 1;
    display: flex;
    min-height: 0;
    border-top: 4px solid #b7b5e2;
}
.canvas {
    width: 963px;
    flex: none;
    position: relative;
    background: #fff;
    padding: 82px 0 0 25px;
}
.note {
    width: 928px;
}
.note-grip {
    height: 7px;
    background: #e1e1e3;
    text-align: center;
    font-size: 5px;
    line-height: 7px;
    color: #666;
    letter-spacing: -.5px;
}
.note-page {
    height: 439px;
    border-bottom: 2px solid #f1f1f1;
    display: grid;
    grid-template-columns: 55px 1fr 9px 16px;
    grid-template-rows: 4px 6px 1fr;
    position: relative;
    margin-left: 1px;
    background: linear-gradient(90deg, #f3f3f3 0 1px, #fff 4px);
}
.note-toolbar {
    grid-column: 2;
    grid-row: 2;
    margin-left: 587px;
    background: #cfcfcf;
    box-shadow: 0 1px 1px #999;
    display: flex;
    gap: 8px;
}
.tb-blue {
    width: 30px;
    background: #3f9be6;
}
.tb-dark {
    width: 15px;
    background: #555;
}
.tb-red {
    width: 10px;
    margin-left: 102px;
    background: #d33;
}
.note-scroll {
    grid-column: 3;
    grid-row: 3;
    background: #f1f1f4;
}
.note-teal {
    grid-column: 4;
    grid-row: 2 / 4;
    height: calc(100% + 8px);
    background: #00767f;
    border-left: 1px solid #c9a24b;
}
.expand {
    position: absolute;
    left: 943px;
    top: 8px;
    fill: none;
    stroke: #555;
    stroke-width: 1;
}
.v-scroll {
    position: absolute;
    right: 0;
    top: 31px;
    width: 11px;
    height: 635px;
    display: flex;
    flex-direction: column;
}
.sb-btn {
    width: 11px;
    height: 11px;
    background: #fff;
    border: 1px solid #c8c8c8;
    font-size: 6px;
    line-height: 9px;
    text-align: center;
    color: #555;
}
.sb-track {
    flex: 1;
    background: linear-gradient(180deg, #f0f0f0 0 82%, #fff 82%);
}
.h-scroll {
    position: absolute;
    left: 2px;
    bottom: 2px;
    width: 948px;
    height: 11px;
    display: flex;
    background: #f4f4f4;
    border-top: 1px solid #ddd;
}
.h-space {
    width: 57px;
}
.h-thumb {
    width: 850px;
    background: #fff;
    border: 1px solid #d8d8d8;
}
.h-scroll .sb-btn:last-child {
    margin-left: auto;
}
.ink {
    position: absolute;
    left: 0;
    top: 0;
}
.ink-lines path {
    fill: none;
    stroke: #fa5a50;
    stroke-width: 2;
    stroke-linecap: round;
    stroke-linejoin: round;
}
.ink-lines .ink-thick {
    stroke-width: 3;
}
.ink-words text {
    font-family: "Liberation Serif", serif;
    font-style: italic;
    fill: #fa5a50;
    stroke: #fa5a50;
    stroke-width: .25;
}
.pen {
    fill: #8a8a8a;
    stroke: #555;
    stroke-width: .5;
}
.ibeam {
    fill: none;
    stroke: #777;
    stroke-width: 1;
}

/* page list */
.pages {
    flex: 1;
    background: #e6e6f5;
    border-left: 1px solid #c9c7e6;
    font-size: 9px;
    color: #444;
}
.add-page {
    height: 21px;
    background: #aaa8d9;
    display: flex;
    align-items: center;
    gap: 3px;
    padding: 0 0 4px 8px;
    color: #55556f;
    font-size: 9.6px;
}
.add-page svg {
    fill: none;
    stroke: #55556f;
    stroke-width: 1;
}
.page-list {
    padding-top: 8px;
}
.page-list li {
    height: 16.7px;
    line-height: 16.7px;
    padding-left: 10px;
    white-space: nowrap;
}
.page-list li.current {
    background: #fff;
    width: 162px;
    border: 1px solid #c2c0e4;
    border-left: none;
    line-height: 15px;
}

/* taskbar in the shared screen */
.mini-bar {
    height: 30px;
    flex: none;
    display: flex;
    background: linear-gradient(90deg, #1f2126, #25262c 60%, #2a2c38);
    color: #ddd;
    font-size: 9.5px;
}
.mini-item {
    width: 37.2px;
    flex: none;
    display: flex;
    align-items: center;
    justify-content: center;
    padding-bottom: 2px;
    position: relative;
}
.mini-item.on::after {
    content: "";
    position: absolute;
    left: 3px;
    right: 3px;
    bottom: 0;
    height: 1.5px;
    background: #5aa5e8;
}
.mini-item.active {
    background: #555359;
}
.mini-win {
    fill: #f4f4f4;
}
.mini-tray {
    margin-left: auto;
    display: flex;
    align-items: center;
}
.mini-tray sup {
    font-size: 11px;
    line-height: 1;
    color: #fff;
    align-self: flex-start;
    margin: 0 5px;
}
.mini-tray sup:nth-of-type(1) {
    margin-right: 7px;
}
.mini-link {
    white-space: nowrap;
    letter-spacing: -.05px;
}
.mini-icons {
    display: grid;
    grid-template-columns: repeat(11, 18.2px);
    justify-items: center;
    align-items: center;
    margin-left: 1px;
}
.mini-clock {
    width: 50px;
    text-align: center;
    font-size: 8.8px;
    line-height: 14px;
}
.mini-notif {
    margin: 0 18px 0 10px;
}

/* call overlay */
.name-tag {
    position: absolute;
    left: 48px;
    top: 745px;
    color: #fff;
    font-size: 16.6px;
}
.tip {
    position: absolute;
    left: 443px;
    top: 608px;
    width: 123px;
    height: 43px;
    background: #3b3b3b;
    border-radius: 5px;
    color: #fff;
    font-size: 17px;
    line-height: 42px;
    text-align: center;
    box-shadow: 0 4px 14px rgba(0, 0, 0, .35);
}
.tip::after {
    content: "";
    position: absolute;
    left: 54px;
    bottom: -7px;
    width: 14px;
    height: 14px;
    background: #3b3b3b;
    transform: rotate(45deg) scale(.7);
}
.call-bar {
    position: absolute;
    left: 453px;
    top: 663px;
    width: 908px;
    height: 78px;
    display: flex;
    background: #424242;
    border-radius: 5px;
    box-shadow: 0 6px 18px rgba(0, 0, 0, .35);
}
.call-timer {
    width: 103px;
    flex: none;
    padding: 2px 14px;
    border-right: 1px solid #1f1f1f;
}
.timer-box {
    height: 74px;
    border: 3px solid #fff;
    border-radius: 5px;
    color: #9b9b9b;
    font-weight: 700;
    font-size: 19.5px;
    line-height: 68px;
    text-align: center;
}
.call-group {
    display: flex;
    flex: none;
}
.call-group-dark {
    background: #3f3f3f;
    border-right: 1px solid #1f1f1f;
}
.call-btn {
    width: 78px;
    display: flex;
    align-items: center;
    justify-content: center;
    padding-bottom: 3px;
}
.call-request {
    flex: 1;
    background: #3d3d3d;
    display: flex;
    align-items: center;
    padding-left: 25px;
}
.request-btn {
    width: 210px;
    height: 48px;
    background: #403f3d;
    border-radius: 4px;
    color: #5f5f5f;
    font-size: 20px;
    line-height: 50px;
    text-align: center;
}
.call-hangup {
    width: 77px;
    flex: none;
    background: #9e3042;
    border-radius: 0 5px 5px 0;
    display: flex;
    align-items: center;
    justify-content: center;
    padding-bottom: 2px;
}

/* strip under the share */
.lower {
    height: 141px;
    flex: none;
    display: flex;
}
.lower-fill {
    flex: 1;
    background: #1a1a1a;
}
.self-view {
    width: 270px;
    flex: none;
    display: flex;
    align-items: center;
    justify-content: center;
    background: radial-gradient(circle at 50% 50%, #4d4c74 0, #454463 30%, #3d3c50 60%);
}
.self-ring {
    width: 81px;
    height: 81px;
    border: 3.5px solid #8e93f0;
    border-radius: 50%;
    padding: 3px;
    background: #3a3a4a;
    box-shadow: 0 4px 12px rgba(0, 0, 0, .3);
}
.self-avatar {
    width: 100%;
    height: 100%;
    border-radius: 50%;
    background: #ecd5e2;
    color: #5c1f4a;
    font-size: 25px;
    line-height: 66px;
    text-align: center;
}

/* windows taskbar */
.taskbar {
    height: 72px;
    flex: none;
    display: grid;
    grid-template-columns: 1fr auto 1fr;
    background:
        linear-gradient(180deg, rgba(255, 255, 255, .1), rgba(210, 220, 240, .2)),
        linear-gradient(90deg, #dde5f2 0, #dfe6f2 32%, #f0e4dc 38%, #ebe0f0 47%, #f3e0e4 58%, #f3e1e6 66%, #e3e6f0 72%, #e0e7ef 80%, #e6e8e4 90%, #efe9d6 100%);
}
.tb-apps {
    display: flex;
}
.tb-item {
    width: 66px;
    height: 72px;
    flex: none;
    display: flex;
    align-items: center;
    justify-content: center;
    position: relative;
    padding-top: 2px;
}
.tb-item svg {
    position: relative;
}
.tile::before {
    content: "";
    position: absolute;
    left: 3px;
    right: 3px;
    top: 7px;
    bottom: 5px;
    background: #fbe5e6;
    border-radius: 6px;
}
.tile-outlook::before {
    left: 2px;
    right: -5px;
    box-shadow: inset -9px 0 0 #fbe3e6, inset -11px 0 0 #f3f0f6;
}
.tile-teams::before {
    content: "";
    position: absolute;
    left: 4px;
    right: 5px;
    top: 9px;
    bottom: 5px;
    background: #f3f2f7;
    border-radius: 5px;
    border-bottom: 2px solid #d5d8e4;
}
.tile-teams::after {
    content: "";
    position: absolute;
    left: 17px;
    right: 17px;
    bottom: 4px;
    height: 6px;
    border-radius: 3px;
    background: #23818f;
}
.has-dot::after {
    content: "";
    position: absolute;
    left: 30px;
    bottom: 6px;
    width: 6px;
    height: 6px;
    border-radius: 50%;
    background: #858585;
}
.alert::after {
    background: #c4271c;
}
.tb-tray {
    display: flex;
    align-items: center;
    justify-content: flex-end;
    color: #222;
    font-size: 16.5px;
    padding-right: 30px;
}
.tb-tray svg:nth-child(1) {
    margin-right: 27px;
}
.tb-tray svg:nth-child(2) {
    margin-right: 26px;
}
.tb-tray svg:nth-child(3) {
    margin-right: 18px;
}
.tray-lang {
    width: 62px;
    text-align: center;
    line-height: 24px;
}
.tb-tray svg:nth-child(n+5) {
    margin-left: 12px;
}
.tray-clock {
    width: 100px;
    text-align: right;
    line-height: 24px;
}
.tray-badge {
    width: 23px;
    height: 23px;
    margin-left: 11px;
    border-radius: 50%;
    background: #1e8290;
    color: #fff;
    font-size: 14px;
    line-height: 23px;
    text-align: center;
}
```
